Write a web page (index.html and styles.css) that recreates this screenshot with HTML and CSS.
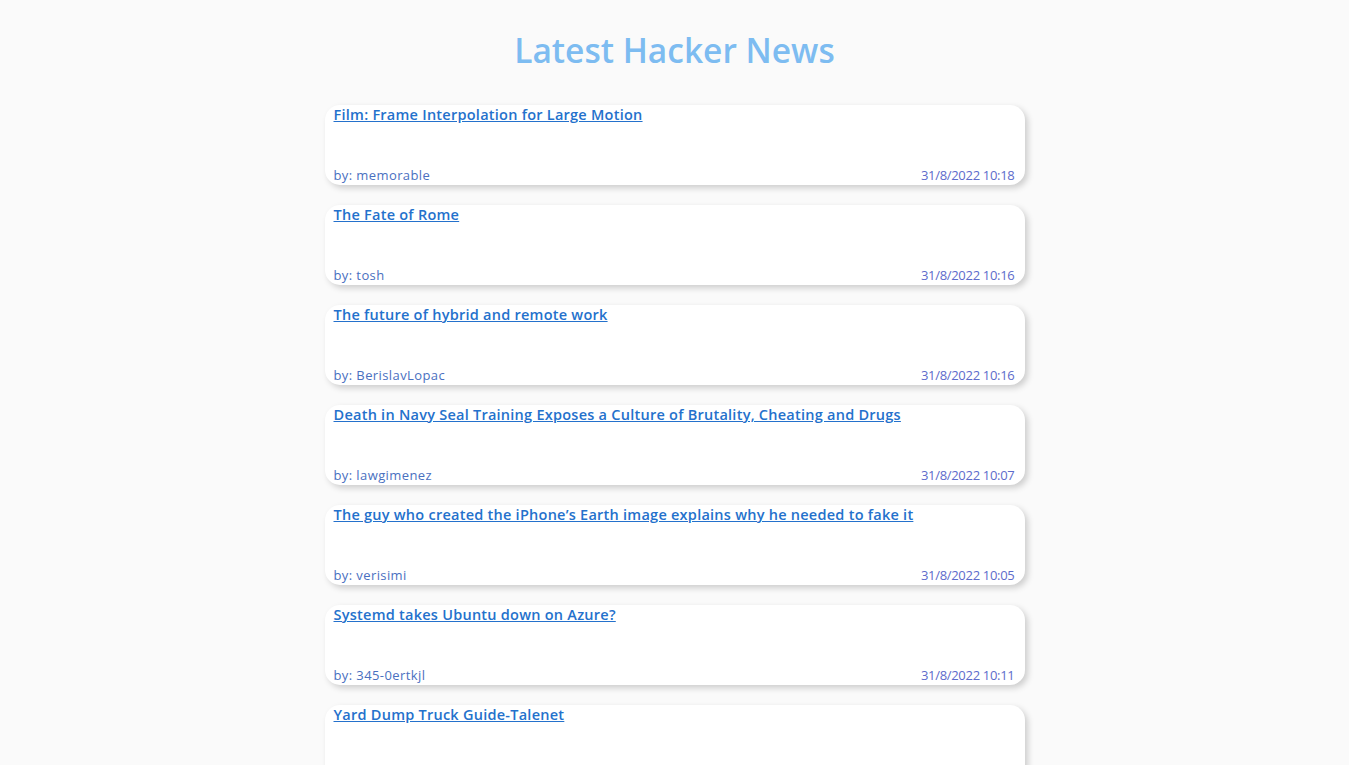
FILE: index.html
```html
<!DOCTYPE html>
<html>
<head>
<meta charset="utf-8">
<link rel="stylesheet" href="styles.css">
</head>
<body>
<main class="page">
  <h1 class="heading">Latest Hacker News</h1>
  <ul class="news-list">
    <li class="card">
      <a class="card-title" href="#">Film: Frame Interpolation for Large Motion</a>
      <div class="card-meta"><span class="author">by: memorable</span><span class="date">31/8/2022 10:18</span></div>
    </li>
    <li class="card">
      <a class="card-title" href="#">The Fate of Rome</a>
      <div class="card-meta"><span class="author">by: tosh</span><span class="date">31/8/2022 10:16</span></div>
    </li>
    <li class="card">
      <a class="card-title" href="#">The future of hybrid and remote work</a>
      <div class="card-meta"><span class="author">by: BerislavLopac</span><span class="date">31/8/2022 10:16</span></div>
    </li>
    <li class="card">
      <a class="card-title" href="#">Death in Navy Seal Training Exposes a Culture of Brutality, Cheating and Drugs</a>
      <div class="card-meta"><span class="author">by: lawgimenez</span><span class="date">31/8/2022 10:07</span></div>
    </li>
    <li class="card">
      <a class="card-title" href="#">The guy who created the iPhone’s Earth image explains why he needed to fake it</a>
      <div class="card-meta"><span class="author">by: verisimi</span><span class="date">31/8/2022 10:05</span></div>
    </li>
    <li class="card">
      <a class="card-title" href="#">Systemd takes Ubuntu down on Azure?</a>
      <div class="card-meta"><span class="author">by: 345-0ertkjl</span><span class="date">31/8/2022 10:11</span></div>
    </li>
    <li class="card">
      <a class="card-title" href="#">Yard Dump Truck Guide-Talenet</a>
      <div class="card-meta"><span class="author">by: talenet</span><span class="date">31/8/2022 10:02</span></div>
    </li>
  </ul>
</main>
</body>
</html>
```

FILE: styles.css
```css
html, body {
  margin: 0;
  padding: 0;
  background: #fafafa;
  font-family: "Open Sans", "Noto Sans", sans-serif;
}

.page {
  width: 700px;
  margin: 0 auto;
  padding-top: 30px;
}

.heading {
  margin: 0 0 35px;
  height: 40px;
  line-height: 40px;
  text-align: center;
  font-size: 33.5px;
  font-weight: 600;
  color: #7dbcf1;
}

.news-list {
  list-style: none;
  margin: 0;
  padding: 0;
  display: flex;
  flex-direction: column;
  gap: 20px;
}

.card {
  height: 80px;
  box-sizing: border-box;
  background: #ffffff;
  border-radius: 15px;
  box-shadow: 3px 3px 6px rgba(0, 0, 0, 0.18);
  padding: 0 10px 1px 9px;
  display: flex;
  flex-direction: column;
  justify-content: space-between;
}

.card-title {
  font-size: 14.5px;
  line-height: 20px;
  font-weight: 600;
  letter-spacing: 0.25px;
  color: #2471cc;
  text-decoration: underline;
  align-self: flex-start;
}

.card-meta {
  display: flex;
  justify-content: space-between;
  font-size: 13px;
  line-height: 18px;
}

.author {
  color: #4a70bf;
  letter-spacing: 0.4px;
}

.date {
  color: #5d6bcb;
  letter-spacing: -0.3px;
}
```
